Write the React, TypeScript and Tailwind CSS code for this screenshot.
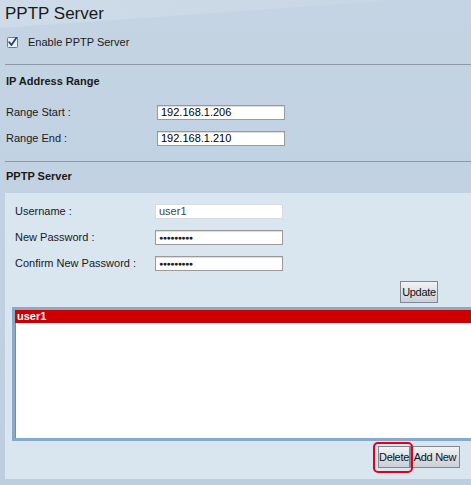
import React from 'react';

function TextBox({ value, light, password }: { value: string; light?: boolean; password?: boolean }) {
  return (
    <div
      className={`w-[128px] h-[15px] bg-white border flex items-center pl-[3px] ${
        light ? 'border-[#d6dbe0]' : 'border-[#9a9a9a] shadow-[inset_0_1px_1px_rgba(0,0,0,0.15)]'
      }`}
    >
      {password ? (
        <span className="text-[7px] leading-none tracking-[-0.5px] text-[#222]">{value}</span>
      ) : (
        <span className={`text-[11px] leading-none ${light ? 'text-[#444]' : 'text-black'}`}>{value}</span>
      )}
    </div>
  );
}

function Btn({ label, className = '' }: { label: string; className?: string }) {
  return (
    <button
      className={`h-[22px] px-0 whitespace-nowrap border border-[#7e8792] bg-gradient-to-b from-[#f1f3f5] to-[#c9d0d7] text-[11px] tracking-[-0.3px] text-[#111] leading-none ${className}`}
    >
      {label}
    </button>
  );
}

export default function App() {
  return (
    <div
      className="relative w-[471px] h-[485px] overflow-hidden bg-gradient-to-b from-[#c4d4e3] to-[#bccee0] text-[11px] text-[#1a1a1a]"
      style={{ fontFamily: '"Liberation Sans", Arial, sans-serif' }}
    >
      {/* glossy highlight at the top */}
      <div className="absolute -left-10 -top-[30px] w-[420px] h-[46px] bg-gradient-to-r from-[#d3dfea] to-[#cbd8e6] -rotate-[4deg] opacity-70" />

      <div className="relative">
        <h1 className="pl-[5px] pt-[4px] h-[24px] text-[17px] leading-[20px] font-normal text-[#1a1a1a]">PPTP Server</h1>

        <div className="mt-[12px] h-[12px] flex items-center pl-[7px]">
          <svg width="11" height="11" viewBox="0 0 11 11">
            <rect x="0.5" y="0.5" width="10" height="10" rx="1" fill="#eef2f6" stroke="#6f7c8c" />
            <path d="M2.2 5.3 L4.4 8 L9.6 0.6" fill="none" stroke="#1d3f8f" strokeWidth="1.8" strokeLinecap="round" strokeLinejoin="round" />
          </svg>
          <span className="ml-[10px] leading-none">Enable PPTP Server</span>
        </div>

        <div className="mt-[16px] ml-[5px] border-t border-[#8e99a5]" />

        <div className="mt-[9px] pl-[6px] h-[14px] leading-[14px] font-bold">IP Address Range</div>

        <div className="mt-[17px] flex items-center h-[15px]">
          <span className="pl-[6px] w-[157px]">Range Start :</span>
          <TextBox value="192.168.1.206" />
        </div>
        <div className="mt-[11px] flex items-center h-[15px]">
          <span className="pl-[6px] w-[157px]">Range End :</span>
          <TextBox value="192.168.1.210" />
        </div>

        <div className="mt-[15px] ml-[5px] border-t border-[#8e99a5]" />

        <div className="mt-[7px] pl-[6px] h-[14px] leading-[14px] font-bold">PPTP Server</div>

        <div className="mt-[10px] ml-[5px] h-[286px] bg-[#d9e5ef] flex flex-col">
          <div className="pt-[11px] flex flex-col gap-[11px]">
            <div className="flex items-center h-[15px]">
              <span className="pl-[10px] w-[150px]">Username :</span>
              <TextBox value="user1" light />
            </div>
            <div className="flex items-center h-[15px]">
              <span className="pl-[10px] w-[150px]">New Password :</span>
              <TextBox value="●●●●●●●●●" password />
            </div>
            <div className="flex items-center h-[15px]">
              <span className="pl-[10px] w-[150px]">Confirm New Password :</span>
              <TextBox value="●●●●●●●●●" password />
            </div>
          </div>

          <div className="mt-[10px] flex justify-end pr-[33px]">
            <Btn label="Update" className="w-[38px]" />
          </div>

          <div className="mt-[4px] ml-[7px] w-[480px] h-[134px] border-[3px] border-[#88a9c8] bg-white shadow-[inset_1px_1px_0_#6f8fae]">
            <div className="h-[13px] bg-[#cc0000] text-white font-bold leading-[13px] pl-[2px]">user1</div>
          </div>

          <div className="mt-[5px] flex justify-end pr-[11px]">
            <div className="relative">
              <Btn label="Delete" className="w-[32px]" />
              <div className="absolute -left-[5px] -top-[4px] -right-[3px] -bottom-[5px] border-2 border-[#e0001b] rounded-[5px]" />
            </div>
            <Btn label="Add New" className="w-[50px]" />
          </div>
        </div>
      </div>
    </div>
  );
}
